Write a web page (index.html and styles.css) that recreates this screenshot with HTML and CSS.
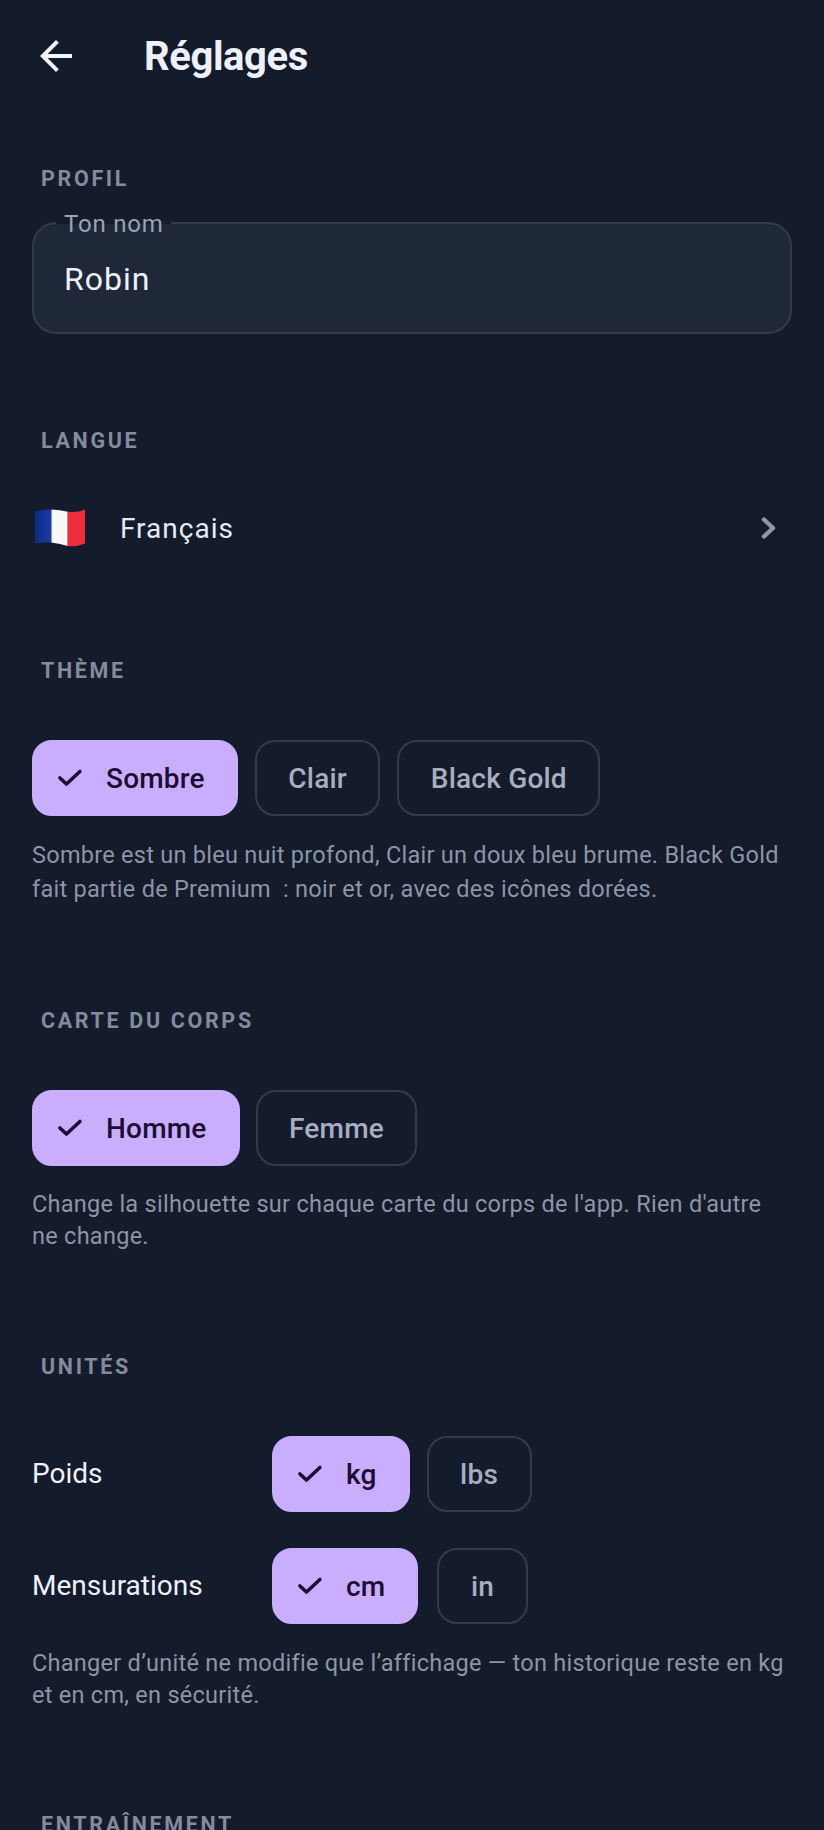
FILE: index.html
```html
<!DOCTYPE html>
<html lang="fr">
<head>
<meta charset="utf-8">
<title>Réglages</title>
<link rel="stylesheet" href="styles.css">
</head>
<body>
<div class="screen">
  <header class="topbar">
    <svg class="back" viewBox="0 0 24 24" width="48" height="48"><path d="M20 11H7.83l5.59-5.59L12 4l-8 8 8 8 1.41-1.41L7.83 13H20v-2z"/></svg>
    <h1 class="title">Réglages</h1>
  </header>

  <section class="sec sec-profil">
    <h2 class="sec-label">PROFIL</h2>
    <div class="field">
      <span class="field-label">Ton nom</span>
      <span class="field-value">Robin</span>
    </div>
  </section>

  <section class="sec sec-langue">
    <h2 class="sec-label">LANGUE</h2>
    <div class="lang-row">
      <svg class="flag" viewBox="0 0 50 38" width="50" height="38">
        <defs><linearGradient id="blue" x1="0" x2="1" y1="0" y2="0"><stop offset="0" stop-color="#0e2a80"/><stop offset="1" stop-color="#183cac"/></linearGradient></defs>
        <path d="M0 2.500Q8 .2 16.500 .5V33.500Q8 33 0 34.500Z" fill="url(#blue)"/>
        <path d="M16.500 .5Q25 .8 32.700 2.800V37Q25 34.500 16.500 33.500Z" fill="#f7f8fb"/>
        <path d="M32.700 2.800Q42 4 50 .5V34.500Q42 38 32.700 37Z" fill="#ee2c3a"/>
      </svg>
      <span class="lang-name">Français</span>
      <svg class="chev" viewBox="0 0 36 36" width="36" height="36"><path d="M14 9.500 23 18l-9 8.500" fill="none" stroke="currentColor" stroke-width="4.400" stroke-linecap="round" stroke-linejoin="round"/></svg>
    </div>
  </section>

  <section class="sec sec-theme">
    <h2 class="sec-label">THÈME</h2>
    <div class="chips">
      <div class="chip on"><svg class="check" viewBox="0 0 24 24"><path d="M5.200 12 10.100 16.500 20.200 7.100"/></svg><span>Sombre</span></div>
      <div class="chip">Clair</div>
      <div class="chip">Black Gold</div>
    </div>
    <p class="hint hint-tall">Sombre est un bleu nuit profond, Clair un doux bleu brume. Black Gold fait partie de Premium&nbsp; : noir et or, avec des icônes dorées.</p>
  </section>

  <section class="sec sec-carte">
    <h2 class="sec-label">CARTE DU CORPS</h2>
    <div class="chips chips-tight">
      <div class="chip on"><svg class="check" viewBox="0 0 24 24"><path d="M5.200 12 10.100 16.500 20.200 7.100"/></svg><span>Homme</span></div>
      <div class="chip">Femme</div>
    </div>
    <p class="hint">Change la silhouette sur chaque carte du corps de l'app. Rien d'autre ne change.</p>
  </section>

  <section class="sec sec-unites">
    <h2 class="sec-label">UNITÉS</h2>
    <div class="unit-row">
      <span class="unit-name">Poids</span>
      <div class="chips">
        <div class="chip on"><svg class="check" viewBox="0 0 24 24"><path d="M5.200 12 10.100 16.500 20.200 7.100"/></svg><span>kg</span></div>
        <div class="chip">lbs</div>
      </div>
    </div>
    <div class="unit-row">
      <span class="unit-name">Mensurations</span>
      <div class="chips chips-wide">
        <div class="chip on"><svg class="check" viewBox="0 0 24 24"><path d="M5.200 12 10.100 16.500 20.200 7.100"/></svg><span>cm</span></div>
        <div class="chip">in</div>
      </div>
    </div>
    <p class="hint hint-units">Changer d’unité ne modifie que l’affichage — ton historique reste en kg et en cm, en sécurité.</p>
  </section>

  <section class="sec sec-train">
    <h2 class="sec-label">ENTRAÎNEMENT</h2>
  </section>
</div>
</body>
</html>
```

FILE: styles.css
```css
* { box-sizing: border-box; }
html, body { margin: 0; padding: 0; background: #141b2b; }
body { font-family: Roboto, "Liberation Sans", sans-serif; color: #eef1fb; }
.screen { width: 824px; height: 1830px; overflow: hidden; padding: 0 32px; }

.topbar { display: flex; align-items: center; height: 112px; }
.back { fill: #f2f4fe; flex: none; }
.title { margin: 0 0 0 64px; font-size: 40px; font-weight: 700; color: #eef1fb; letter-spacing: -0.4px; }

.sec-label { margin: 0 0 0 9px; font-size: 21.5px; line-height: 28px; font-weight: 700; letter-spacing: 2.65px; color: #838b9d; }
.sec-profil { padding-top: 53px; }
.sec-langue { padding-top: 93px; }
.sec-theme { padding-top: 99px; }
.sec-carte { padding-top: 101px; }
.sec-unites { padding-top: 101px; }
.sec-train { padding-top: 100px; }

.field { position: relative; margin-top: 29px; height: 112px; background: #1e2838; border: 2px solid #323a4b; border-radius: 24px; padding: 2px 30px 0; display: flex; align-items: center; }
.field-label { position: absolute; left: 22px; top: -12px; padding: 0 7px 0 8px; font-size: 24px; line-height: 24px; letter-spacing: 0.8px; color: #9ba3b4; background: linear-gradient(#141b2b 50%, #1e2838 50%); }
.field-value { font-size: 32px; letter-spacing: 1px; color: #eef1fb; }

.lang-row { display: flex; align-items: center; height: 60px; margin-top: 43px; }
.flag { flex: none; margin-left: 3px; }
.lang-name { margin-left: 35px; font-size: 28px; letter-spacing: 1px; color: #e6eaf6; flex: 1; }
.chev { color: #8f97a8; flex: none; margin-right: 6px; }

.chips { display: flex; gap: 17px; }
.chips-tight { gap: 16px; }
.chips-wide { gap: 19px; }
.sec-theme .chips, .sec-carte .chips { margin-top: 55px; }
.chip { height: 76px; padding: 0 31.5px; border: 2px solid #333a4b; border-radius: 20px; display: flex; align-items: center; font-size: 28px; font-weight: 500; letter-spacing: 0.2px; color: #a6aec0; }
.chip.on { background: #c9aeff; border-color: #c9aeff; color: #1a0f33; padding: 0 31px 0 19px; }
.check { width: 32px; height: 32px; margin-right: 21px; flex: none; fill: none; stroke: #1a0f33; stroke-width: 2.7; stroke-linecap: round; stroke-linejoin: round; }

.hint { margin: 22px 0 0; font-size: 23.5px; line-height: 32px; letter-spacing: 0.27px; color: #8d95a6; }
.hint-tall { line-height: 34px; }
.hint-units { margin-top: 23px; }

.unit-row { display: flex; align-items: center; margin-top: 36px; }
.sec-unites .sec-label + .unit-row { margin-top: 55px; }
.unit-name { width: 240px; flex: none; padding-bottom: 2px; font-size: 28px; letter-spacing: 0; color: #eef1fb; }
```
